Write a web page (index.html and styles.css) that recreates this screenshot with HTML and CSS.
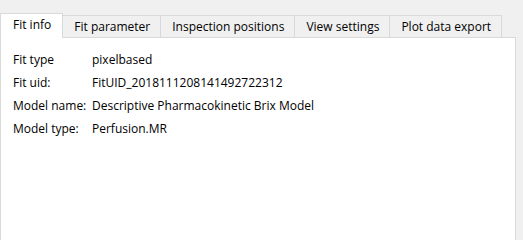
FILE: index.html
```html
<!DOCTYPE html>
<html>
<head>
<meta charset="utf-8">
<link rel="stylesheet" href="styles.css">
</head>
<body>
<div class="tabs">
  <div class="tab selected">Fit info</div>
  <div class="tab">Fit parameter</div>
  <div class="tab">Inspection positions</div>
  <div class="tab">View settings</div>
  <div class="tab">Plot data export</div>
</div>
<div class="pane">
  <div class="info">
    <div class="label">Fit type</div><div class="value">pixelbased</div>
    <div class="label">Fit uid:</div><div class="value">FitUID_2018111208141492722312</div>
    <div class="label">Model name:</div><div class="value">Descriptive Pharmacokinetic Brix Model</div>
    <div class="label">Model type:</div><div class="value">Perfusion.MR</div>
  </div>
</div>
</body>
</html>
```
FILE: styles.css
```css
html, body {
  margin: 0;
  padding: 0;
  background: #f0f0f0;
  font-family: "Open Sans", "Noto Sans", sans-serif;
  font-size: 12px;
  color: #000;
  overflow: hidden;
}
.tabs {
  display: flex;
  align-items: flex-end;
  padding-top: 15px;
  height: 22px;
  position: relative;
  z-index: 1;
}
.tab {
  height: 21px;
  line-height: 21px;
  padding: 0 10px 0 11px;
  border: 1px solid #d9d9d9;
  border-bottom: none;
  margin-left: -1px;
  background: #f0f0f0;
  white-space: nowrap;
}
.tab.selected {
  margin-left: 0;
  height: 24px;
  line-height: 22px;
  padding: 0 11px 0 12px;
  background: #fff;
  margin-bottom: -1px;
}
.pane {
  box-sizing: border-box;
  width: 516px;
  min-height: calc(100vh - 37px);
  background: #fff;
  border: 1px solid #d9d9d9;
  border-bottom: none;
  padding: 10px 12px;
}
.info {
  display: grid;
  grid-template-columns: 79px auto;
  grid-auto-rows: 23px;
  align-items: center;
}
.label, .value {
  white-space: nowrap;
}
```
